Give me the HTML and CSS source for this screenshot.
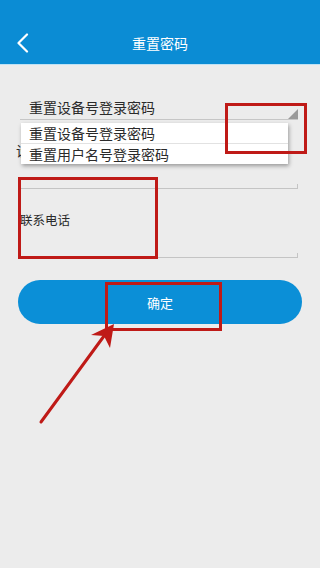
FILE: index.html
```html
<!DOCTYPE html>
<html lang="zh">
<head>
<meta charset="utf-8">
<meta name="viewport" content="width=device-width, initial-scale=1">
<title>重置密码</title>
<link rel="stylesheet" href="styles.css">
</head>
<body>
<div class="app">
  <header class="topbar">
    <div class="back">
      <svg width="14" height="20" viewBox="0 0 14 20" aria-hidden="true"><polyline points="11,1.5 2.5,10 11,18.5" fill="none" stroke="#fff" stroke-width="2.2" stroke-linecap="round" stroke-linejoin="round"/></svg>
    </div>
    <h1 class="title">重置密码</h1>
    <div class="spacer"></div>
  </header>

  <main class="content">
    <div class="spinner">
      <span class="spinner-text">重置设备号登录密码</span>
      <span class="spinner-arrow"></span>
    </div>

    <div class="field field-first">
      <span class="label label-first">设备号</span>
    </div>

    <div class="field field-second">
      <span class="label">联系电话</span>
    </div>

    <button class="confirm" type="button">确定</button>
  </main>

  <div class="popup">
    <div class="popup-item">重置设备号登录密码</div>
    <div class="popup-item">重置用户名号登录密码</div>
  </div>

  <div class="mark mark-spinner"></div>
  <div class="mark mark-field"></div>
  <div class="mark mark-button"></div>

  <svg class="arrow" width="320" height="568" viewBox="0 0 320 568" aria-hidden="true">
    <line x1="41" y1="422" x2="104" y2="336" stroke="#bf1a17" stroke-width="3" stroke-linecap="round"/>
    <polygon points="114,324 91,335 104,336 110,348" fill="#bf1a17"/>
  </svg>
</div>
</body>
</html>
```

FILE: styles.css
```css
* { box-sizing: border-box; }
html, body {
  margin: 0;
  padding: 0;
  background: #ececec;
}
body {
  font-family: "Noto Sans CJK SC", "Noto Sans", sans-serif;
  color: #333;
  width: 320px;
  height: 568px;
  overflow: hidden;
}
.app {
  position: relative;
  width: 320px;
  height: 568px;
  background: #ececec;
}
.topbar {
  height: 65px;
  background: #0b8cd4;
  border-bottom: 1px solid #bfe2f5;
  display: grid;
  grid-template-columns: 48px 1fr 48px;
  align-items: center;
  padding-top: 21px;
}
.back {
  display: flex;
  align-items: center;
  padding-left: 16px;
  height: 20px;
}
.back svg { display: block; }
.title {
  margin: 0;
  text-align: center;
  color: #fff;
  font-size: 14px;
  font-weight: normal;
  line-height: 20px;
}
.content {
  display: flex;
  flex-direction: column;
}
.spinner {
  position: relative;
  margin: 30px 22px 0 20px;
  height: 25px;
  border-bottom: 1px solid #c6c6c6;
  display: flex;
  align-items: center;
  padding-left: 9px;
}
.spinner-text {
  font-size: 14px;
  line-height: 24px;
  color: #2a2a2a;
}
.spinner-arrow {
  position: absolute;
  right: 0;
  bottom: 0;
  width: 0;
  height: 0;
  border-style: solid;
  border-width: 0 0 10px 10px;
  border-color: transparent transparent #9a9a9a transparent;
}
.field {
  position: relative;
  margin: 0 22px 0 20px;
  border-bottom: 1px solid #c4c4c4;
}
.field::before, .field::after {
  content: "";
  position: absolute;
  bottom: 0;
  width: 1px;
  height: 4px;
  background: #c4c4c4;
}
.field::before { left: 0; }
.field::after { right: 0; }
.field-first { padding: 20px 0 28px; }
.field-second { padding: 21px 0 27px; }
.label {
  display: block;
  font-size: 12.5px;
  line-height: 20px;
  color: #2a2a2a;
}
.label-first {
  margin-left: -4px;
  width: 5px;
  overflow: hidden;
  white-space: nowrap;
  font-size: 14px;
}
.confirm {
  margin: 22px 18px 0 18px;
  height: 44px;
  border: none;
  border-radius: 22px;
  background: #0b8fd7;
  color: #fff;
  font-family: "Noto Sans CJK SC", "Noto Sans", sans-serif;
  font-size: 13px;
  padding: 0;
}
.popup {
  position: absolute;
  left: 21px;
  top: 123px;
  width: 267px;
  background: #fff;
  box-shadow: 1px 2px 4px rgba(0,0,0,0.35);
}
.popup-item {
  height: 20px;
  line-height: 20px;
  padding-left: 8px;
  font-size: 14px;
  color: #2a2a2a;
}
.popup-item + .popup-item {
  border-top: 1px solid #e2e2e2;
  height: 21px;
}
.mark {
  position: absolute;
  border: 3px solid #bf1a17;
}
.mark-spinner { left: 225px; top: 103px; width: 82px; height: 51px; }
.mark-field { left: 18px; top: 177px; width: 140px; height: 82px; }
.mark-button { left: 105px; top: 282px; width: 117px; height: 49px; }
.arrow {
  position: absolute;
  left: 0;
  top: 0;
  pointer-events: none;
}
```
